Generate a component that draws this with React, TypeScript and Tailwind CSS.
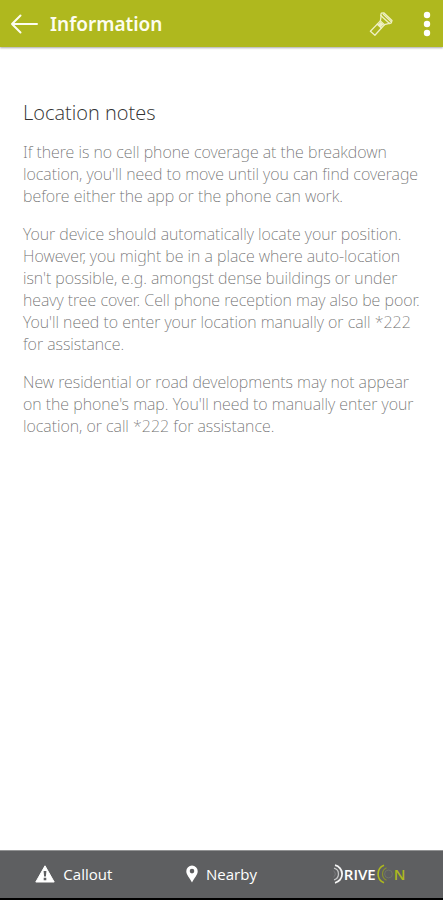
import React from "react";

const notes = [
  "If there is no cell phone coverage at the breakdown location, you'll need to move until you can find coverage before either the app or the phone can work.",
  "Your device should automatically locate your position. However, you might be in a place where auto-location isn't possible, e.g. amongst dense buildings or under heavy tree cover. Cell phone reception may also be poor. You'll need to enter your location manually or call *222 for assistance.",
  "New residential or road developments may not appear on the phone's map. You'll need to manually enter your location, or call *222 for assistance.",
];

function BackIcon() {
  return (
    <svg width="28" height="20" viewBox="0 0 28 20" fill="none" stroke="#fdfdf0" strokeWidth="2" strokeLinecap="round" strokeLinejoin="round" aria-hidden="true">
      <path d="M27 10H2M10.500 1.500L2 10l8.500 8.500" />
    </svg>
  );
}

function TorchIcon() {
  return (
    <svg width="24" height="24" viewBox="0 0 24 24" fill="none" stroke="#eff0c4" strokeWidth="1.300" strokeLinejoin="round" strokeLinecap="round" aria-hidden="true">
      <path d="M12.300 1.200l2.500-.4 8.200 7.700-.7 2.400-1.800.7-8.800-8.100z" />
      <path d="M12.200 3.600l-.8 5.300-10 10.300 4.500 4 9.500-10.500 5-1.400" />
      <path d="M14.300 2.200l7.400 7M11.400 8.900l4 3.800M8.300 12.200l4.100 3.900" />
      <path d="M9.500 13l2-2.200 2 1.800-2 2.200z" fill="#eff0c4" />
    </svg>
  );
}

function MoreIcon() {
  return (
    <svg width="8" height="26" viewBox="0 0 8 26" fill="#fff" aria-hidden="true">
      <circle cx="4" cy="4" r="3.200" />
      <circle cx="4" cy="13" r="3.200" />
      <circle cx="4" cy="22" r="3.200" />
    </svg>
  );
}

function WarningIcon() {
  return (
    <svg width="20" height="18" viewBox="0 0 20 18" aria-hidden="true">
      <path d="M10 .8L19.200 17H.8z" fill="#fff" stroke="#fff" strokeLinejoin="round" />
      <path d="M8.600 6h2.800l-.5 5.500H9.100zM8.700 12.800h2.600v2.400H8.700z" fill="#5e5f61" />
    </svg>
  );
}

function PinIcon() {
  return (
    <svg width="12" height="18" viewBox="0 0 12 18" aria-hidden="true">
      <path fill="#fff" fillRule="evenodd" d="M6 .5A5.700 5.700 0 0 0 .3 6.200C.3 10 4 13.200 6 17.500c2-4.300 5.700-7.500 5.700-11.300A5.700 5.700 0 0 0 6 .5zm0 3.300a2.300 2.300 0 1 1 0 4.600 2.300 2.300 0 0 1 0-4.600z" />
    </svg>
  );
}

function DriveOnLogo() {
  return (
    <span className="flex items-center text-[15px] leading-5 font-semibold">
      <svg width="11" height="20" viewBox="0 0 11 20" fill="none" aria-hidden="true">
        <path d="M2 1.200a9 9 0 0 1 0 17.600" stroke="#f4f4f4" strokeWidth="1.800" />
        <path d="M1 4.200a6 6 0 0 1 0 11.600" stroke="#c5c6c7" strokeWidth="1.300" />
        <path d="M.5 7a3.400 3.400 0 0 1 0 6" stroke="#7c7d80" />
      </svg>
      <span className="text-white">RIVE</span>
      <svg width="18" height="20" viewBox="0 0 18 20" fill="none" aria-hidden="true">
        <path d="M8 1.200a9.500 9.500 0 0 0 0 17.600" stroke="#adb81e" strokeWidth="1.600" />
        <path d="M10.500 3.800a6.800 6.800 0 0 0 0 12.400" stroke="#87902f" strokeWidth="1.200" />
        <circle cx="12.500" cy="10" r="3.900" stroke="#75786a" strokeWidth=".8" />
      </svg>
      <span className="text-[#adb81e]">N</span>
    </span>
  );
}

export default function App() {
  return (
    <div className="flex min-h-screen flex-col bg-white font-['Open_Sans',sans-serif]">
      <header className="z-10 flex h-[47px] items-center bg-[#afb81e] pr-3 pl-2.5 shadow-[0_1px_2px_rgba(0,0,0,0.35)]">
        <button type="button" aria-label="Back">
          <BackIcon />
        </button>
        <h1 className="ml-3 flex-1 font-['Noto_Sans',sans-serif] text-[19px] leading-6 font-semibold text-[#fdfdf0]">Information</h1>
        <button type="button" aria-label="Torch" className="mr-[30px]">
          <TorchIcon />
        </button>
        <button type="button" aria-label="More options">
          <MoreIcon />
        </button>
      </header>

      <main className="flex-1 pt-[52px] pr-3 pl-[23px]">
        <h2 className="mb-3.5 text-xl leading-7 font-light text-[#333]">Location notes</h2>
        <div className="space-y-4 font-['Noto_Sans',sans-serif] text-base leading-[22px] font-extralight text-[#6c6c6c]">
          {notes.map((note) => (
            <p key={note}>{note}</p>
          ))}
        </div>
      </main>

      <nav className="grid h-[50px] grid-cols-3 border-t border-b-2 border-t-[#929394] border-b-black bg-[#5e5f61] pb-0.5 text-[15px] leading-5 text-white">
        <button type="button" className="flex items-center justify-center gap-2">
          <WarningIcon />
          Callout
        </button>
        <button type="button" className="flex items-center justify-center gap-2">
          <PinIcon />
          Nearby
        </button>
        <button type="button" aria-label="DriveOn" className="flex items-center justify-center">
          <DriveOnLogo />
        </button>
      </nav>
    </div>
  );
}
